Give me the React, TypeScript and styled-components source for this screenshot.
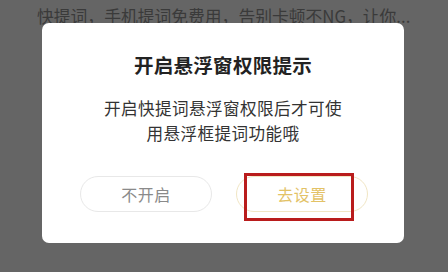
import React from "react";
import styled, { createGlobalStyle } from "styled-components";

const Global = createGlobalStyle`
  html, body { margin: 0; padding: 0; }
  body {
    background: #656565;
    font-family: "Noto Sans CJK SC", "Noto Sans", sans-serif;
    width: 448px;
    height: 272px;
    overflow: hidden;
  }
`;

const Page = styled.div`
  width: 448px;
  height: 272px;
  background: #656565;
  position: relative;
`;

const BgText = styled.div`
  padding: 3px 0 0 37px;
  font-size: 16.8px;
  line-height: 26px;
  color: #3a3a3a;
  white-space: nowrap;
`;

const Overlay = styled.div`
  position: absolute;
  inset: 0;
  display: flex;
  align-items: flex-start;
  justify-content: flex-start;
  padding: 23px 0 0 42px;
`;

const Dialog = styled.div`
  width: 362px;
  box-sizing: border-box;
  background: #ffffff;
  border-radius: 7px;
  padding: 28px 0 31px;
  display: flex;
  flex-direction: column;
  align-items: center;
`;

const Title = styled.div`
  font-size: 19.5px;
  line-height: 28px;
  font-weight: 700;
  color: #222222;
  letter-spacing: 0.3px;
`;

const Body = styled.div`
  margin-top: 16.5px;
  font-size: 16.6px;
  line-height: 25px;
  color: #333333;
  letter-spacing: 0.4px;
  text-align: center;
`;

const Actions = styled.div`
  margin-top: 30.5px;
  display: flex;
  gap: 24px;
  padding-left: 2px;
`;

const Button = styled.div<{ $primary?: boolean }>`
  position: relative;
  width: 132px;
  height: 36px;
  box-sizing: border-box;
  border-radius: 18px;
  border: 1px solid ${(p) => (p.$primary ? "#f1e6c4" : "#e8e8e8")};
  display: flex;
  align-items: center;
  justify-content: center;
  font-size: 16px;
  letter-spacing: 0.5px;
  color: ${(p) => (p.$primary ? "#e3c266" : "#8a8a8a")};
`;

const Highlight = styled.div`
  position: absolute;
  left: 7px;
  top: -4px;
  width: 110px;
  height: 48px;
  box-sizing: border-box;
  border: 3px solid #b91c1c;
`;

export default function App() {
  return (
    <Page>
      <Global />
      <BgText>快提词，手机提词免费用，告别卡顿不NG，让你...</BgText>
      <Overlay>
        <Dialog>
          <Title>开启悬浮窗权限提示</Title>
          <Body>
            开启快提词悬浮窗权限后才可使
            <br />
            用悬浮框提词功能哦
          </Body>
          <Actions>
            <Button>不开启</Button>
            <Button $primary>
              去设置
              <Highlight />
            </Button>
          </Actions>
        </Dialog>
      </Overlay>
    </Page>
  );
}
